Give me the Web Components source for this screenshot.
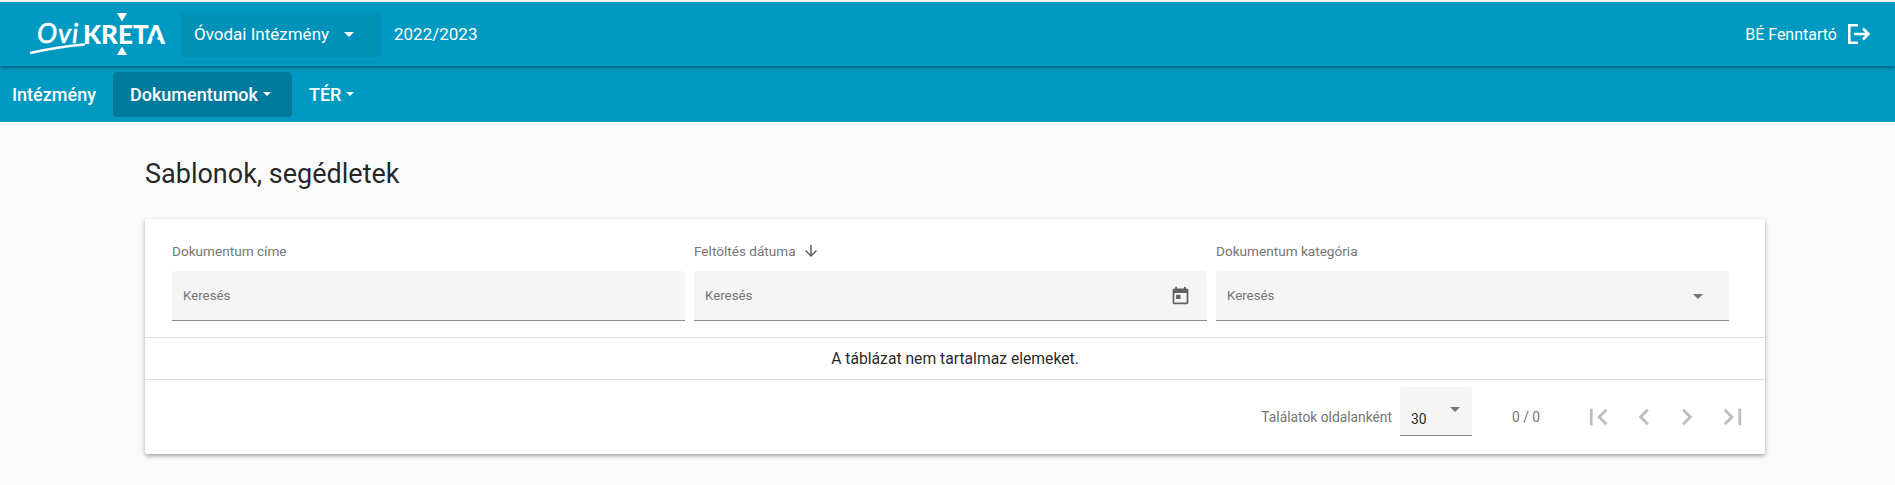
<!DOCTYPE html>
<html lang="hu">
<head>
<meta charset="utf-8">
<title>Sablonok, segédletek</title>
<style>
    html, body { margin: 0; height: 100%; overflow: hidden; background: #fafafa; font-family: Roboto, "Liberation Sans", sans-serif; }
</style>
</head>
<body>
<app-header></app-header>
<app-nav></app-nav>
<doc-page heading="Sablonok, segédletek">
    <filter-field label="Dokumentum címe"></filter-field>
    <filter-field label="Feltöltés dátuma" sort icon="calendar"></filter-field>
    <filter-field label="Dokumentum kategória" icon="arrow"></filter-field>
</doc-page>

<script>
const ICONS = {
    calendar: '<svg width="21" height="21" viewBox="0 0 24 24" fill="#616161" style="margin-right:2px"><path d="M19 4h-1V2h-2v2H8V2H6v2H5c-1.100 0-2 .9-2 2v14c0 1.100.9 2 2 2h14c1.100 0 2-.9 2-2V6c0-1.100-.9-2-2-2zm0 16H5V9h14v11zM7 11h5v5H7z"/></svg>',
    arrow: '<svg width="24" height="24" viewBox="0 0 24 24" fill="#757575" style="margin-right:5px"><path d="M7 10l5 5 5-5z"/></svg>',
    first: '<path d="M5 5h2.400v14H5zM20 6.700 18.300 5l-7 7 7 7 1.700-1.700L14.700 12z"/>',
    prev: '<path d="M17 6.700 15.300 5l-7 7 7 7 1.700-1.700L11.700 12z"/>',
    next: '<path d="M8.700 5 7 6.700 12.300 12 7 17.300 8.700 19l7-7z"/>',
    last: '<path d="M16.600 5H19v14h-2.400zM4 6.700 5.700 5l7 7-7 7L4 17.300 9.300 12z"/>'
};

class AppHeader extends HTMLElement {
    constructor() {
        super();
        this.attachShadow({ mode: 'open' });
        this.shadowRoot.innerHTML = `
            <style>
                :host {
                    display: flex;
                    align-items: center;
                    position: relative;
                    z-index: 2;
                    height: 64px;
                    margin-top: 2px;
                    padding: 0 24px 0 30px;
                    background: #0099c2;
                    color: #fff;
                    font-size: 16px;
                    box-shadow: 0 2px 4px rgba(0, 0, 0, 0.35);
                }
                svg.logo { display: block; flex: none; }
                .logo text { fill: #fff; }
                .school {
                    display: flex;
                    align-items: center;
                    box-sizing: border-box;
                    width: 201px;
                    height: 45px;
                    margin-left: 14px;
                    padding-left: 13px;
                    border-radius: 4px;
                    background: #0091b8;
                    font-size: 17px;
                }
                .caret { margin-left: 15px; width: 0; height: 0; border: 5px solid transparent; border-top-color: #fff; border-bottom: 0; }
                .year { margin-left: 12px; font-size: 17px; }
                .user { margin-left: auto; display: flex; align-items: center; gap: 10px; }
                .user svg { display: block; }
            </style>
            <svg class="logo" width="137" height="46" viewBox="0 0 137 46">
                <text x="7" y="32" font-family="Lato, sans-serif" font-style="italic" font-size="27" letter-spacing="1" stroke="#fff" stroke-width="0.600">Ovi</text>
                <path d="M0 42C18 38 36 35 54 33.500" fill="none" stroke="#fff" stroke-width="2.400" stroke-linecap="round"/>
                <text x="53" y="33" font-family="Lato, sans-serif" font-weight="900" font-size="26">KRETA</text>
                <rect x="122.500" y="25" width="5" height="4.500" fill="#0099c2"/>
                <path d="M87 2h10l-5 8.500zM92 35.500l5 8.500H87z" fill="#fff"/>
            </svg>
            <div class="school">Óvodai Intézmény<span class="caret"></span></div>
            <div class="year">2022/2023</div>
            <div class="user">
                <span>BÉ Fenntartó</span>
                <svg width="24" height="24" viewBox="0 0 24 24" fill="none" stroke="#fff" stroke-width="2.600">
                    <path d="M11 3.300H2.300v17.400H11"/>
                    <path d="M7 12h14.500M16 6.500l5.500 5.500-5.500 5.500"/>
                </svg>
            </div>
        `;
    }
}

class AppNav extends HTMLElement {
    constructor() {
        super();
        this.attachShadow({ mode: 'open' });
        this.shadowRoot.innerHTML = `
            <style>
                :host {
                    display: flex;
                    align-items: center;
                    height: 56px;
                    padding-left: 12px;
                    background: #0099c2;
                    color: #fff;
                    font-size: 18px;
                    font-weight: 500;
                }
                a { display: flex; align-items: center; height: 45px; }
                .active { box-sizing: border-box; width: 179px; margin: 0 17px; padding: 0 17px; border-radius: 4px; background: #007a9c; }
                i { margin-left: 5px; width: 0; height: 0; border: 4px solid transparent; border-top-color: #fff; border-bottom: 0; }
            </style>
            <a>Intézmény</a>
            <a class="active">Dokumentumok<i></i></a>
            <a>TÉR<i></i></a>
        `;
    }
}

class FilterField extends HTMLElement {
    constructor() {
        super();
        this.attachShadow({ mode: 'open' });
    }

    connectedCallback() {
        const label = this.getAttribute('label') || '';
        const icon = this.getAttribute('icon');
        const sort = this.hasAttribute('sort');
        this.shadowRoot.innerHTML = `
            <style>
                :host { display: block; min-width: 0; }
                .label {
                    display: flex;
                    align-items: center;
                    height: 16px;
                    margin-bottom: 12px;
                    color: #757575;
                    font-size: 13.600px;
                }
                .label svg { margin-left: 6px; }
                .box {
                    display: flex;
                    align-items: center;
                    justify-content: space-between;
                    box-sizing: border-box;
                    height: 50px;
                    padding: 0 14px 0 11px;
                    border-bottom: 1px solid #8c8c8c;
                    border-radius: 4px 4px 0 0;
                    background: #f5f5f5;
                    color: #757575;
                    font-size: 13.300px;
                }
            </style>
            <div class="label">${label}${sort ? '<svg width="18" height="18" viewBox="0 0 24 24" fill="#616161"><path d="M20 12l-1.410-1.410L13 16.170V4h-2v12.170l-5.580-5.590L4 12l8 8z"/></svg>' : ''}</div>
            <div class="box"><span>Keresés</span>${icon ? ICONS[icon] : ''}</div>
        `;
    }
}

class TablePaginator extends HTMLElement {
    constructor() {
        super();
        this.attachShadow({ mode: 'open' });
        const buttons = ['first', 'prev', 'next', 'last'].map(name =>
            `<svg width="28" height="28" viewBox="0 0 24 24" fill="#bdbdbd">${ICONS[name]}</svg>`).join('');
        this.shadowRoot.innerHTML = `
            <style>
                :host {
                    display: flex;
                    align-items: center;
                    justify-content: flex-end;
                    height: 74px;
                    padding-right: 18px;
                    color: #757575;
                    font-size: 13.800px;
                }
                .select {
                    display: flex;
                    box-sizing: border-box;
                    width: 72px;
                    height: 49px;
                    margin: -11px 0 0 8px;
                    padding: 24px 0 0 11px;
                    border-bottom: 1px solid #8c8c8c;
                    border-radius: 4px 4px 0 0;
                    background: #f5f5f5;
                    color: rgba(0, 0, 0, 0.87);
                    justify-content: space-between;
                }
                .select svg { margin: -14px 5px 0 0; }
                .count { width: 29px; margin: 0 43px 0 40px; white-space: nowrap; }
                .pages { display: flex; gap: 17px; }
                .pages svg { display: block; }
            </style>
            <span>Találatok oldalanként</span>
            <div class="select"><span>30</span>${ICONS.arrow}</div>
            <span class="count">0 / 0</span>
            <div class="pages">${buttons}</div>
        `;
    }
}

class DocPage extends HTMLElement {
    constructor() {
        super();
        this.attachShadow({ mode: 'open' });
    }

    connectedCallback() {
        this.shadowRoot.innerHTML = `
            <style>
                :host { display: block; padding: 0 130px 0 145px; }
                h1 {
                    height: 97px;
                    margin: 0;
                    color: rgba(0, 0, 0, 0.87);
                    font-size: 27px;
                    font-weight: 400;
                    line-height: 105px;
                }
                .card {
                    border-radius: 2px;
                    background: #fff;
                    box-shadow: 0 2px 4px rgba(0, 0, 0, 0.35);
                }
                .filters {
                    display: grid;
                    grid-template-columns: repeat(3, 1fr);
                    gap: 9px;
                    box-sizing: border-box;
                    height: 119px;
                    padding: 24px 36px 0 27px;
                    border-bottom: 1px solid #e0e0e0;
                }
                .empty {
                    height: 41px;
                    border-bottom: 1px solid #e0e0e0;
                    color: rgba(0, 0, 0, 0.87);
                    font-size: 15.700px;
                    line-height: 41px;
                    text-align: center;
                }
            </style>
            <h1>${this.getAttribute('heading')}</h1>
            <div class="card">
                <div class="filters"><slot></slot></div>
                <div class="empty">A táblázat nem tartalmaz elemeket.</div>
                <table-paginator></table-paginator>
            </div>
        `;
    }
}

customElements.define('app-header', AppHeader);
customElements.define('app-nav', AppNav);
customElements.define('filter-field', FilterField);
customElements.define('table-paginator', TablePaginator);
customElements.define('doc-page', DocPage);
</script>
</body>
</html>
